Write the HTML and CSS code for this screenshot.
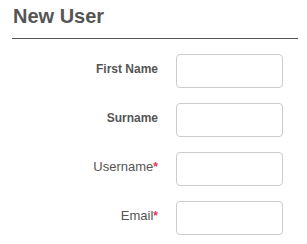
FILE: index.html
```html
<!DOCTYPE html>
<html lang="en">
<head>
<meta charset="UTF-8">
<meta name="viewport" content="width=device-width, initial-scale=1.0">
<title>New User</title>
<link rel="stylesheet" href="styles.css">
</head>
<body>

<div class="container">
    <h1>New User</h1>

    <form class="user-form">
        <div class="form-row">
            <label for="first-name">First Name</label>
            <input type="text" id="first-name">
        </div>
        <div class="form-row">
            <label for="surname">Surname</label>
            <input type="text" id="surname">
        </div>
        <div class="form-row">
            <label for="username" class="required">Username<span class="star">*</span></label>
            <input type="text" id="username" required>
        </div>
        <div class="form-row">
            <label for="email" class="required">Email<span class="star">*</span></label>
            <input type="email" id="email" required>
        </div>
    </form>
</div>

</body>
</html>
```

FILE: styles.css
```css
body {
    font-family: "Liberation Sans", Arial, sans-serif;
    background-color: #fff;
    margin: 0;
    padding: 0;
}

.container {
    padding: 4px 9px 0 12px;
}

h1 {
    margin: 0 0 15px 0;
    padding: 0 0 10px 1px;
    font-size: 20px;
    line-height: 24px;
    font-weight: bold;
    color: #555;
    border-bottom: 1px solid #555;
}

.form-row {
    display: flex;
    align-items: flex-start;
    margin-bottom: 15px;
}

.form-row label {
    width: 146px;
    margin-right: 18px;
    padding-top: 8px;
    text-align: right;
    font-size: 12px;
    line-height: 14px;
    font-weight: bold;
    color: #555;
}

.form-row label.required {
    padding-top: 7px;
    font-size: 13px;
    line-height: 15px;
    font-weight: normal;
    color: #555;
}

.star {
    color: #e8384f;
    font-weight: bold;
    font-size: 12px;
}

.form-row input {
    box-sizing: border-box;
    width: 107px;
    height: 34px;
    margin: 0;
    padding: 4px 8px;
    border: 1px solid #ccc;
    border-radius: 4px;
    background: #fff;
}
```
